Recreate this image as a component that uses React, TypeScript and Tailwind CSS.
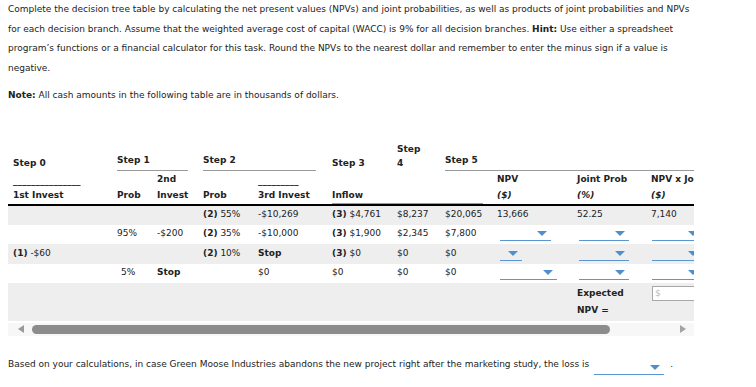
import React from "react";

const dd = "h-[14px] border-b border-[#5a96cf] flex items-center justify-end pr-[4px]";

function Drop({ w }: { w: string }) {
  return (
    <div className={`${dd} ${w}`}>
      <svg width="10" height="5" viewBox="0 0 10 5" className="shrink-0">
        <polygon points="0,0 10,0 5,5" fill="#4f8fcc" />
      </svg>
    </div>
  );
}

function Tag({ n }: { n: string }) {
  return <span className="font-bold">({n})</span>;
}

export default function App() {
  return (
    <div className="px-2 text-[9px] text-[#222] font-['DejaVu_Sans',Verdana,sans-serif] bg-white min-h-[387px]">
      <p className="leading-[19.5px] w-[690px]">
        Complete the decision tree table by calculating the net present values (NPVs) and joint probabilities, as well as
        products of joint probabilities and NPVs for each decision branch. Assume that the weighted average cost of capital
        (WACC) is 9% for all decision branches. <b>Hint:</b> Use either a spreadsheet program’s functions or a financial
        calculator for this task. Round the NPVs to the nearest dollar and remember to enter the minus sign if a value is
        negative.
      </p>
      <p className="leading-[19.5px] mt-2">
        <b>Note:</b> All cash amounts in the following table are in thousands of dollars.
      </p>

      <div className="w-[686px] overflow-hidden mt-[33px]">
        <table className="border-collapse table-fixed w-[722px] text-left">
          <colgroup>
            <col className="w-[104px]" />
            <col className="w-[40px]" />
            <col className="w-[46px]" />
            <col className="w-[55px]" />
            <col className="w-[74px]" />
            <col className="w-[65px]" />
            <col className="w-[48px]" />
            <col className="w-[52px]" />
            <col className="w-[80px]" />
            <col className="w-[74px]" />
            <col className="w-[84px]" />
          </colgroup>
          <thead className="font-bold">
            <tr className="h-[32px] align-bottom leading-[14px]">
              <th className="pl-[5px] pb-[1px]">Step 0</th>
              <th colSpan={2} className="pl-[5px] pr-[10px]">
                <div className="border-b border-[#9a9a9a] pb-[3px]">Step 1</div>
              </th>
              <th colSpan={2} className="pl-[5px] pr-[11px]">
                <div className="border-b border-[#9a9a9a] pb-[3px]">Step 2</div>
              </th>
              <th className="pl-[5px] pb-[1px]">Step 3</th>
              <th className="pl-[5px] pb-[1px]">
                Step
                <br />4
              </th>
              <th colSpan={4} className="pl-[5px]">
                <div className="border-b border-[#9a9a9a] pb-[3px]">Step 5</div>
              </th>
            </tr>
            <tr className="h-[16px] leading-[16px]">
              <th className="pl-[5px] align-bottom leading-[12px]">_______________</th>
              <th />
              <th className="pl-[5px]">2nd</th>
              <th />
              <th className="pl-[5px] align-bottom leading-[12px]">_________</th>
              <th />
              <th />
              <th />
              <th className="pl-[5px]">NPV</th>
              <th className="pl-[5px]">Joint Prob</th>
              <th className="pl-[5px] whitespace-nowrap">NPV x Joint</th>
            </tr>
            <tr className="h-[17px] leading-[16px] border-b-2 border-black">
              <th className="pl-[5px]">1st Invest</th>
              <th className="pl-[5px]">Prob</th>
              <th className="pl-[5px]">Invest</th>
              <th className="pl-[5px]">Prob</th>
              <th className="pl-[5px]">3rd Invest</th>
              <th colSpan={3} className="pl-[5px] pr-[9px] align-bottom">
                <div className="border-b border-[#9a9a9a]">Inflow</div>
              </th>
              <th className="pl-[5px] italic">($)</th>
              <th className="pl-[5px] italic">(%)</th>
              <th className="pl-[5px] italic">($)</th>
            </tr>
          </thead>
          <tbody className="[&_td]:pl-[5px] whitespace-nowrap">
            <tr className="h-[20px] bg-[#eeeeee]">
              <td />
              <td />
              <td />
              <td>
                <Tag n="2" /> 55%
              </td>
              <td>-$10,269</td>
              <td>
                <Tag n="3" /> $4,761
              </td>
              <td>$8,237</td>
              <td>$20,065</td>
              <td>13,666</td>
              <td>52.25</td>
              <td>7,140</td>
            </tr>
            <tr className="h-[19px]">
              <td />
              <td>95%</td>
              <td>-$200</td>
              <td>
                <Tag n="2" /> 35%
              </td>
              <td>-$10,000</td>
              <td>
                <Tag n="3" /> $1,900
              </td>
              <td>$2,345</td>
              <td>$7,800</td>
              <td className="!pl-[8px]">
                <Drop w="w-[51px]" />
              </td>
              <td className="!pl-[7px]">
                <Drop w="w-[50px]" />
              </td>
              <td className="!pl-[6px]">
                <Drop w="w-[50px]" />
              </td>
            </tr>
            <tr className="h-[20px] bg-[#eeeeee]">
              <td>
                <Tag n="1" /> -$60
              </td>
              <td />
              <td />
              <td>
                <Tag n="2" /> 10%
              </td>
              <td className="font-bold">Stop</td>
              <td>
                <Tag n="3" /> $0
              </td>
              <td>$0</td>
              <td>$0</td>
              <td className="!pl-[8px]">
                <Drop w="w-[22px]" />
              </td>
              <td className="!pl-[7px]">
                <Drop w="w-[50px]" />
              </td>
              <td className="!pl-[6px]">
                <Drop w="w-[50px]" />
              </td>
            </tr>
            <tr className="h-[19px]">
              <td />
              <td className="!pl-[9px]">5%</td>
              <td className="font-bold">Stop</td>
              <td />
              <td>$0</td>
              <td>$0</td>
              <td>$0</td>
              <td>$0</td>
              <td className="!pl-[8px]">
                <Drop w="w-[57px]" />
              </td>
              <td className="!pl-[7px]">
                <Drop w="w-[50px]" />
              </td>
              <td className="!pl-[6px]">
                <Drop w="w-[50px]" />
              </td>
            </tr>
            <tr className="h-[38px] bg-[#eeeeee] align-top">
              <td colSpan={9} />
              <td className="font-bold leading-[17px] pt-[2px]">
                Expected
                <br />
                NPV =
              </td>
              <td className="!pl-[6px] pt-[3px]">
                <div className="w-[70px] h-[15px] border border-[#a8a8a8] bg-white pl-[2px] leading-[13px] text-[#bbbbbb]">
                  $
                </div>
              </td>
            </tr>
          </tbody>
        </table>
      </div>

      {/* scrollbar */}
      <div className="w-[686px] h-[13px] mt-[2px] bg-[#f7f7f7] flex items-center">
        <svg width="6" height="8" viewBox="0 0 6 8" className="ml-[10px]">
          <polygon points="6,0 6,8 0,4" fill="#9a9a9a" />
        </svg>
        <div className="ml-[8px] w-[578px] h-[9px] rounded-full bg-[#8c8c8c]" />
        <svg width="6" height="8" viewBox="0 0 6 8" className="ml-auto mr-[8px]">
          <polygon points="0,0 0,8 6,4" fill="#a3a3a3" />
        </svg>
      </div>

      <div className="mt-[20px] flex items-end leading-[16px]">
        <span>
          Based on your calculations, in case Green Moose Industries abandons the new project right after the marketing
          study, the loss is
        </span>
        <div className="ml-[5px] w-[70px] h-[14px] border-b border-[#5a96cf] flex items-center justify-end pr-[4px] mb-[-3px]">
          <svg width="10" height="5" viewBox="0 0 10 5">
            <polygon points="0,0 10,0 5,5" fill="#4f8fcc" />
          </svg>
        </div>
        <span className="ml-[6px]">.</span>
      </div>
    </div>
  );
}
